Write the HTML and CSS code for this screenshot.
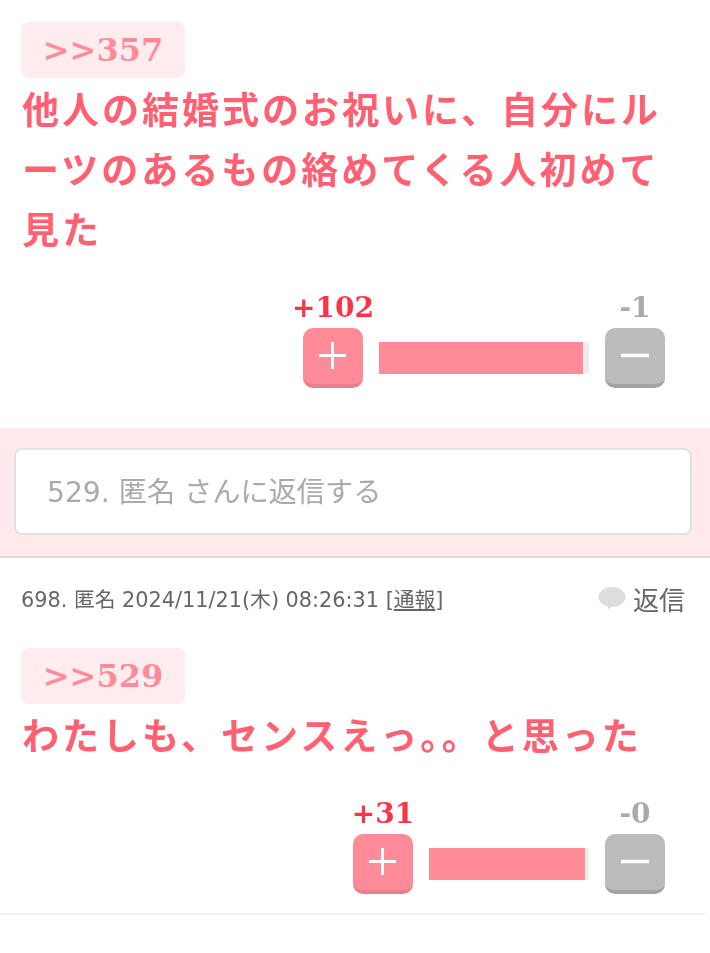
FILE: index.html
```html
<!doctype html>
<html lang="ja">
<head>
<meta charset="utf-8">
<link rel="stylesheet" href="styles.css">
<title>コメント</title>
</head>
<body>

<div class="comment first">
    <div class="comment-body">
        <a class="anchor">&gt;&gt;357</a>
        <p class="text">他人の結婚式のお祝いに、自分にルーツのあるもの絡めてくる人初めて見た</p>
    </div>
    <div class="vote">
        <div class="vote-btn">
            <span class="count count-plus">+102</span>
            <span class="btn btn-plus"><svg width="30" height="30" viewBox="0 0 30 30"><path d="M14.500 1v27M1 14.500h27" stroke="#fff" stroke-width="3"/></svg></span>
        </div>
        <div class="bar bar-long"><div class="bar-fill" style="width:97%"></div></div>
        <div class="vote-btn">
            <span class="count count-minus">-1</span>
            <span class="btn btn-minus"><svg width="30" height="30" viewBox="0 0 30 30"><path d="M1 14.500h28" stroke="#fff" stroke-width="3.500"/></svg></span>
        </div>
    </div>
</div>

<div class="reply-band">
    <div class="reply-input">529. 匿名 さんに返信する</div>
</div>

<div class="comment second">
    <div class="meta">
        <span class="meta-info">698. 匿名 2024/11/21(木) 08:26:31 [<a class="report">通報</a>]</span>
        <a class="reply-link">
            <svg width="28" height="24" viewBox="0 0 28 24"><path d="M14 1c7.500 0 13.500 4.500 13.500 10S21.500 21 14 21l-1 0-3 2.500 0-3.200C4.500 19 .5 15.500 .5 11 .5 5.500 6.500 1 14 1z" fill="#ddd"/></svg>
            返信
        </a>
    </div>
    <div class="comment-body">
        <a class="anchor">&gt;&gt;529</a>
        <p class="text">わたしも、センスえっ。。と思った</p>
    </div>
    <div class="vote">
        <div class="vote-btn">
            <span class="count count-plus">+31</span>
            <span class="btn btn-plus"><svg width="30" height="30" viewBox="0 0 30 30"><path d="M14.500 1v27M1 14.500h27" stroke="#fff" stroke-width="3"/></svg></span>
        </div>
        <div class="bar bar-short"><div class="bar-fill" style="width:97.500%"></div></div>
        <div class="vote-btn">
            <span class="count count-minus">-0</span>
            <span class="btn btn-minus"><svg width="30" height="30" viewBox="0 0 30 30"><path d="M1 14.500h28" stroke="#fff" stroke-width="3.500"/></svg></span>
        </div>
    </div>
</div>

</body>
</html>
```

FILE: styles.css
```css
html, body {
    margin: 0;
    padding: 0;
}
body {
    font-family: "DejaVu Sans", "Noto Sans CJK JP", sans-serif;
    color: #666;
    background: #fff;
    filter: blur(0.5px);
}
p {
    margin: 0;
}
.comment-body {
    padding: 0 21px;
}
.first {
    padding-top: 22px;
    padding-bottom: 40px;
}
.second {
    width: 705px;
    padding-bottom: 19px;
    border-bottom: 2px solid #f0f0f0;
}
.second .vote {
    padding-right: 40px;
}
.anchor {
    display: inline-block;
    box-sizing: border-box;
    width: 164px;
    height: 56px;
    line-height: 57px;
    text-align: center;
    font-family: "DejaVu Serif", serif;
    font-size: 32px;
    font-weight: bold;
    color: #ff8a98;
    background: #ffecee;
    border-radius: 8px;
    vertical-align: top;
}
.text {
    font-family: "Noto Sans CJK JP", sans-serif;
    font-size: 37px;
    line-height: 60px;
    letter-spacing: 3px;
    font-weight: bold;
    color: #ff6072;
    padding-left: 1px;
}
.vote {
    display: flex;
    justify-content: flex-end;
    align-items: flex-end;
    padding-right: 45px;
    margin-top: 34px;
}
.vote-btn {
    width: 60px;
    display: flex;
    flex-direction: column;
    align-items: center;
}
.count {
    font-family: "DejaVu Serif", serif;
    font-size: 28px;
    line-height: 32px;
    font-weight: bold;
    white-space: nowrap;
    margin-bottom: 4px;
}
.count-plus {
    color: #ff3347;
}
.count-minus {
    color: #aaa;
}
.btn {
    width: 60px;
    height: 60px;
    box-sizing: border-box;
    border-radius: 10px;
    display: flex;
    align-items: center;
    justify-content: center;
}
.btn-plus {
    background: #ff8a98;
    border-bottom: 4px solid #e8808c;
}
.btn-minus {
    background: #bbb;
    border-bottom: 4px solid #a3a3a3;
}
.bar {
    height: 32px;
    margin: 0 16px 14px;
    background: #eee;
}
.bar-long {
    width: 210px;
}
.bar-short {
    width: 160px;
}
.bar-fill {
    height: 100%;
    background: #ff8a98;
}
.reply-band {
    background: #ffe9eb;
    border-bottom: 2px solid #ddd;
    padding: 20px 18px 21px 14px;
}
.reply-input {
    box-sizing: border-box;
    height: 87px;
    line-height: 85px;
    padding-left: 31px;
    font-size: 28.200px;
    color: #aaa;
    background: #fff;
    border: 2px solid #e2e2e2;
    border-radius: 8px;
}
.meta {
    display: flex;
    justify-content: space-between;
    align-items: center;
    padding: 20px 20px 30px 21px;
    height: 40px;
}
.meta-info {
    font-size: 20.800px;
    color: #666;
}
.report {
    text-decoration: underline;
}
.reply-link {
    display: flex;
    align-items: center;
    gap: 7px;
    font-size: 26px;
    color: #666;
}
```
